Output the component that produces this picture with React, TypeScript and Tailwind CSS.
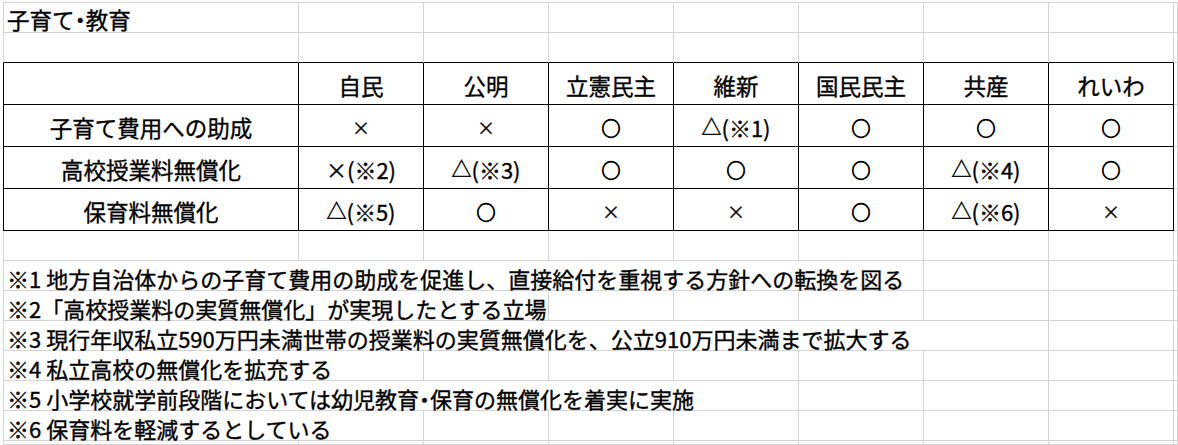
import React from "react";

const parties = ["自民", "公明", "立憲民主", "維新", "国民民主", "共産", "れいわ"];

const rows = [
  { label: "子育て費用への助成", values: ["×", "×", "○", "△(※1)", "○", "○", "○"] },
  { label: "高校授業料無償化", values: ["×(※2)", "△(※3)", "○", "○", "○", "△(※4)", "○"] },
  { label: "保育料無償化", values: ["△(※5)", "○", "×", "×", "○", "△(※6)", "×"] },
];

const notes = [
  { text: "※1 地方自治体からの子育て費用の助成を促進し、直接給付を重視する方針への転換を図る", span: 6 },
  { text: "※2「高校授業料の実質無償化」が実現したとする立場", span: 3 },
  { text: "※3 現行年収私立590万円未満世帯の授業料の実質無償化を、公立910万円未満まで拡大する", span: 7 },
  { text: "※4 私立高校の無償化を拡充する", span: 2 },
  { text: "※5 小学校就学前段階においては幼児教育・保育の無償化を着実に実施", span: 5 },
  { text: "※6 保育料を軽減するとしている", span: 2 },
];

const spanCls: Record<number, string> = {
  1: "",
  2: "col-span-2",
  3: "col-span-3",
  5: "col-span-5",
  6: "col-span-6",
  7: "col-span-7",
};

type Kind = "title" | "head" | "mark" | "note";
type Cell = { text?: string; span?: number; kind?: Kind };

// table sits on sheet rows 2..5, columns 0..7
const inTable = (r: number, c: number) => r >= 2 && r <= 5 && c <= 7;

function edges(r: number, c: number) {
  const cls = ["border-r", "border-b"];
  cls.push(inTable(r, c) ? "border-r-black" : "border-r-[#d4d4d4]");
  cls.push(r >= 1 && r <= 5 && c <= 7 ? "border-b-black" : "border-b-[#d4d4d4]");
  if (c === 0) cls.push("border-l", inTable(r, c) ? "border-l-black" : "border-l-[#d4d4d4]");
  if (r === 0) cls.push("border-t", "border-t-[#d4d4d4]");
  return cls.join(" ");
}

const blank = (n: number): Cell[] => Array.from({ length: n }, () => ({}));

const sheet: Cell[][] = [
  [{ text: "子育て・教育", kind: "title" }, ...blank(8)],
  blank(9),
  [{}, ...parties.map((p) => ({ text: p, kind: "head" as const })), {}],
  ...rows.map((row) => [
    { text: row.label, kind: "head" as const },
    ...row.values.map((v) => ({ text: v, kind: "mark" as const })),
    {},
  ]),
  blank(9),
  ...notes.map((n) => [{ text: n.text, span: n.span, kind: "note" as const }, ...blank(9 - n.span)]),
  blank(9),
];

// narrow middle dot like the proportional sheet font
function Dotted({ text }: { text: string }) {
  const parts = text.split("・");
  return (
    <>
      {parts.map((p, i) => (
        <React.Fragment key={i}>
          {i > 0 && <span className="[font-feature-settings:'palt']">・</span>}
          {p}
        </React.Fragment>
      ))}
    </>
  );
}

function Mark({ text }: { text: string }) {
  const sym = text[0];
  const rest = text.slice(1);
  const symCls =
    sym === "○"
      ? "text-[19px] [-webkit-text-stroke:0.9px_#000]"
      : sym === "△"
        ? "text-[20px] [-webkit-text-stroke:0.5px_#000]"
        : rest
          ? "text-[21px]"
          : "text-[18px]";
  return (
    <>
      <span className={symCls}>{sym}</span>
      {rest}
    </>
  );
}

const kindCls: Record<Kind, string> = {
  title: "pl-[3px] pt-[3px] text-[22.5px]",
  head: "justify-center pt-[3px] text-[22.5px]",
  mark: "justify-center pt-[3px] text-[22px]",
  note: "pl-[3px] pt-[4px] text-[22px]",
};

export default function App() {
  return (
    <div className="w-[1178px] h-[445px] overflow-hidden bg-white pt-[2px] pl-[3px] text-black font-['Noto_Sans_CJK_JP','Noto_Sans',sans-serif] [-webkit-text-stroke:0.35px_#000]">
      <div className="grid h-full grid-cols-[296px_repeat(7,125px)_1fr] grid-rows-[31px_30px_repeat(4,42px)_repeat(7,30px)_1fr]">
        {sheet.map((cells, r) => {
          let c = 0;
          return cells.map((cell) => {
            const start = c;
            const span = cell.span ?? 1;
            c += span;
            return (
              <div
                key={`${r}-${start}`}
                className={`flex items-center leading-none whitespace-nowrap ${spanCls[span]} ${edges(r, start)} ${cell.kind ? kindCls[cell.kind] : ""}`}
              >
                {cell.kind === "mark" && cell.text ? (
                  <Mark text={cell.text} />
                ) : cell.text ? (
                  <Dotted text={cell.text} />
                ) : null}
              </div>
            );
          });
        })}
      </div>
    </div>
  );
}
